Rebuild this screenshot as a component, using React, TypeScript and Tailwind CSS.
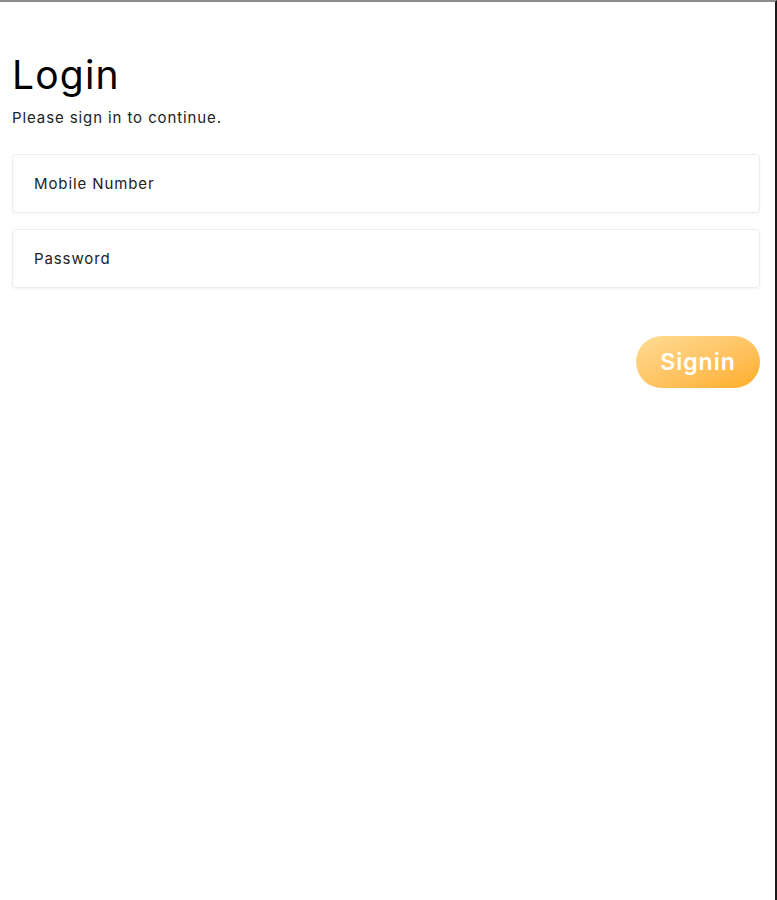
import React from 'react';

export default function App() {
    return (
        <div
            className="w-[777px] h-[900px] bg-white border-t-2 border-t-[#8c8c8c] border-r-2 border-r-[#1a1a1a] overflow-hidden"
            style={{ fontFamily: 'Inter, "Noto Sans", sans-serif' }}
        >
            <div className="pl-[12px] pr-[15px] pt-[49px]">
                <h1 className="text-[39px] leading-[48px] text-black font-normal tracking-[1.2px]">Login</h1>
                <p className="text-[15px] leading-[20px] text-[#222] mt-[9px] tracking-[0.9px]">Please sign in to continue.</p>

                <div className="mt-[26px] flex flex-col gap-[16px]">
                    <input
                        placeholder="Mobile Number"
                        className="h-[59px] w-full rounded-[4px] border border-[#ececec] shadow-[0_1px_3px_rgba(0,0,0,0.05)] px-[21px] text-[15px] tracking-[0.9px] text-[#222] placeholder:text-[#222] outline-none"
                    />
                    <input
                        type="password"
                        placeholder="Password"
                        className="h-[59px] w-full rounded-[4px] border border-[#ececec] shadow-[0_1px_3px_rgba(0,0,0,0.05)] px-[21px] text-[15px] tracking-[0.9px] text-[#222] placeholder:text-[#222] outline-none"
                    />
                </div>

                <div className="mt-[48px] flex justify-end">
                    <button className="w-[124px] h-[52px] rounded-full bg-gradient-to-br from-[#ffdc94] to-[#ffad1f] text-white text-[23px] tracking-[1px] font-semibold">
                        Signin
                    </button>
                </div>
            </div>
        </div>
    );
}
